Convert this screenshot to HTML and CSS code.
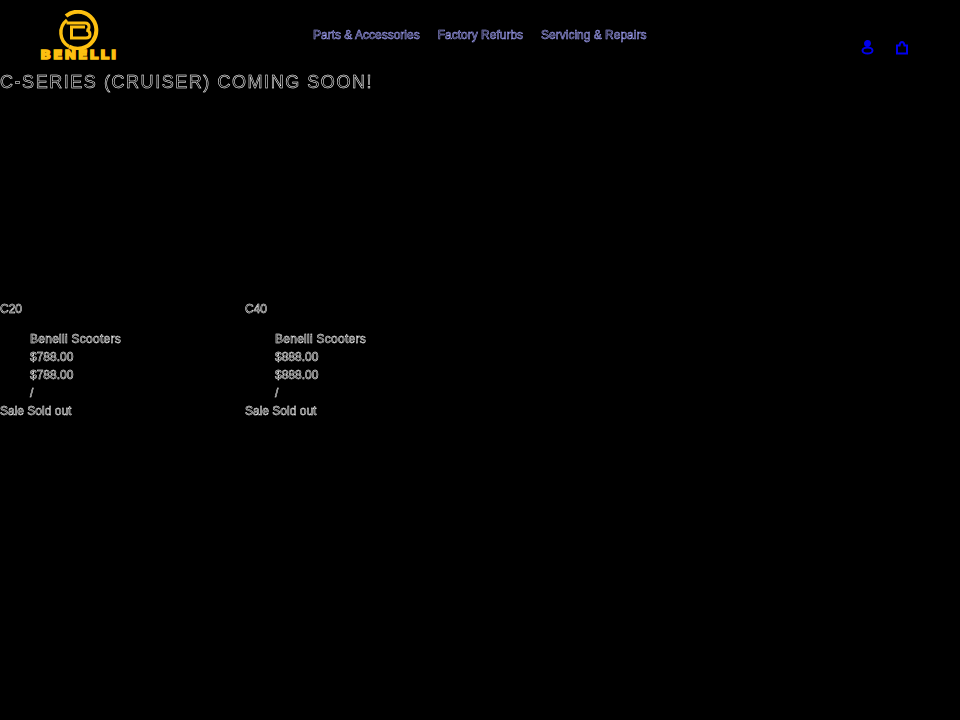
FILE: index.html
```html
<!DOCTYPE html>
<html lang="en">
<head>
<meta charset="utf-8">
<title>C-Series (Cruiser) Coming Soon!</title>
<link rel="stylesheet" href="styles.css">
</head>
<body>
<header class="site-header">
  <a class="logo" href="#">
    <svg class="logo-mark" width="42" height="40" viewBox="0 0 42 40" aria-hidden="true">
      <path d="M8 6A18.500 18.500 0 1 1 11 36.500" fill="none" stroke="#fdc010" stroke-width="4"/>
      <path d="M11 36.500A16 16 0 0 1 9 10" fill="none" stroke="#fdc010" stroke-width="3.400"/>
      <path d="M8.500 13H27Q31 13 31 17Q31 20 28.500 20Q32 21 32 24.500Q32 28 28 28H13.500V17H27" fill="none" stroke="#fdc010" stroke-width="3"/>
    </svg>
    <span class="logo-word">BENELLI</span>
  </a>
  <nav class="main-nav">
    <a href="#">Parts &amp; Accessories</a>
    <a href="#">Factory Refurbs</a>
    <a href="#">Servicing &amp; Repairs</a>
  </nav>
  <div class="header-icons">
    <svg width="16" height="16" viewBox="0 0 16 16" aria-hidden="true"><circle cx="7.500" cy="4.500" r="2.800" fill="#0000ee" stroke="#0000ee" stroke-width="1.200"/><ellipse cx="7.500" cy="11.500" rx="5" ry="3" fill="none" stroke="#0000ee" stroke-width="2"/></svg>
    <svg width="16" height="16" viewBox="0 0 16 16" aria-hidden="true"><path d="M3 14.500V6.500H5.500Q6 3 8 3Q10 3 10.500 6.500H13V14.500Z" fill="none" stroke="#0000ee" stroke-width="2"/></svg>
  </div>
</header>
<h1 class="page-title">C-SERIES (CRUISER) COMING SOON!</h1>
<ul class="products">
  <li class="product">
    <a class="product-name" href="#">C20</a>
    <dl class="details">
      <dd class="vendor">Benelli Scooters</dd>
      <dd>$788.00</dd>
      <dd>$788.00</dd>
      <dd>/</dd>
    </dl>
    <div class="badges">Sale Sold out</div>
  </li>
  <li class="product">
    <a class="product-name" href="#">C40</a>
    <dl class="details">
      <dd class="vendor">Benelli Scooters</dd>
      <dd>$888.00</dd>
      <dd>$888.00</dd>
      <dd>/</dd>
    </dl>
    <div class="badges">Sale Sold out</div>
  </li>
</ul>
</body>
</html>
```
FILE: styles.css
```css
html, body {
  margin: 0;
  background: #000;
  color: #000;
  -webkit-text-stroke: 0.5px #fff;
  font-family: "Liberation Sans", Arial, sans-serif;
  font-size: 12px;
  line-height: 18px;
}
a { color: inherit; text-decoration: none; }
.site-header {
  display: flex;
  height: 70px;
  align-items: flex-start;
}
.logo {
  display: flex;
  flex-direction: column;
  align-items: center;
  margin-left: 40px;
  margin-top: 10px;
  width: 78px;
}
.logo-word {
  display: inline-block;
  transform: scaleX(1.17);
  color: #fdc010;
  -webkit-text-stroke: 1.3px #fdc010;
  font-family: "DejaVu Sans", sans-serif;
  font-weight: 700;
  font-size: 12px;
  line-height: 11px;
  letter-spacing: 1.6px;
}
.main-nav {
  display: flex;
  gap: 18px;
  margin-left: 195px;
  margin-top: 26px;
  -webkit-text-stroke: 0.55px #a6a6ff;
  will-change: transform;
}
.header-icons {
  display: flex;
  gap: 18px;
  margin-left: auto;
  margin-right: 50px;
  margin-top: 39px;
}
.page-title {
  margin: 0;
  font-size: 18px;
  line-height: 24px;
  font-weight: 400;
  letter-spacing: 1.55px;
  -webkit-text-stroke: 0.5px #fff;
  will-change: transform;
}
.products {
  list-style: none;
  margin: 206px 0 0;
  padding: 0;
  display: grid;
  grid-template-columns: repeat(4, 245px);
  will-change: transform;
}
.product-name { display: block; }
.details { margin: 12px 0 0; }
.details dd { margin: 0 0 0 30px; }
.details .vendor { letter-spacing: 0.27px; }
```
